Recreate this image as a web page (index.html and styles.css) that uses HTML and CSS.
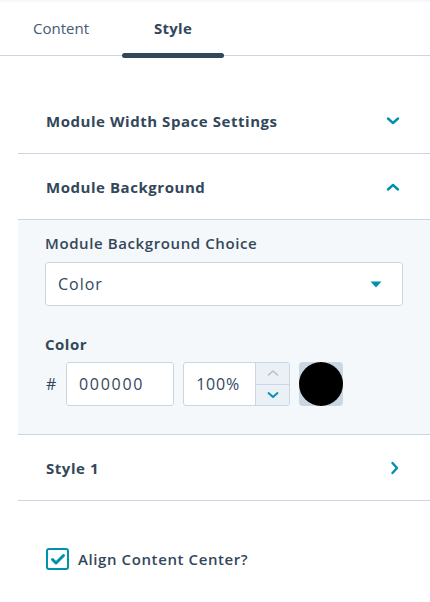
FILE: index.html
```html
<!DOCTYPE html>
<html>
<head>
<meta charset="utf-8">
<link rel="stylesheet" href="styles.css">
</head>
<body>
<div class="tabs">
  <div class="tab">Content</div>
  <div class="tab active">Style</div>
</div>
<div class="sections">
  <div class="row">
    <span class="row-title">Module Width Space Settings</span>
    <svg class="chev" width="14" height="10" viewBox="0 0 14 10"><path d="M2 2.5 L7 7 L12 2.5" fill="none" stroke="#0091ae" stroke-width="2.4" stroke-linecap="round" stroke-linejoin="round"/></svg>
  </div>
  <div class="row">
    <span class="row-title">Module Background</span>
    <svg class="chev" width="14" height="10" viewBox="0 0 14 10"><path d="M2 7.5 L7 3 L12 7.5" fill="none" stroke="#0091ae" stroke-width="2.4" stroke-linecap="round" stroke-linejoin="round"/></svg>
  </div>
  <div class="panel">
    <div class="label">Module Background Choice</div>
    <div class="select">
      <span class="select-val">Color</span>
      <svg width="12" height="7" viewBox="0 0 12 7"><path d="M0.5 0.5 L11.5 0.5 L6 6.5 Z" fill="#0091ae"/></svg>
    </div>
    <div class="label label-color">Color</div>
    <div class="color-row">
      <span class="hash">#</span>
      <div class="input hex">000000</div>
      <div class="input pct">
        <span class="pct-val">100%</span>
        <div class="stepper">
          <div class="step"><svg width="12" height="8" viewBox="0 0 12 8"><path d="M1.5 6 L6 2 L10.5 6" fill="none" stroke="#b0c1d4" stroke-width="1.6" stroke-linecap="round" stroke-linejoin="round"/></svg></div>
          <div class="step step-down"><svg width="12" height="8" viewBox="0 0 12 8"><path d="M1.5 2 L6 6 L10.5 2" fill="none" stroke="#0091ae" stroke-width="1.8" stroke-linecap="round" stroke-linejoin="round"/></svg></div>
        </div>
      </div>
      <div class="swatch"><div class="dot"></div></div>
    </div>
  </div>
  <div class="row">
    <span class="row-title">Style 1</span>
    <svg class="chev" width="10" height="14" viewBox="0 0 10 14"><path d="M2.5 2 L7 7 L2.5 12" fill="none" stroke="#0091ae" stroke-width="2.4" stroke-linecap="round" stroke-linejoin="round"/></svg>
  </div>
  <label class="check">
    <span class="box"><svg width="16" height="13" viewBox="0 0 16 13"><path d="M2.5 6.5 L6 10 L13.5 2.5" fill="none" stroke="#0091ae" stroke-width="3" stroke-linecap="round" stroke-linejoin="round"/></svg></span>
    <span class="check-label">Align Content Center?</span>
  </label>
</div>
</body>
</html>
```
FILE: styles.css
```css
* { box-sizing: border-box; }
body {
  margin: 0;
  background: #fff;
  font-family: "Open Sans", "Liberation Sans", sans-serif;
  color: #33475b;
}
.tabs {
  display: flex;
  gap: 10px;
  padding-left: 10px;
  height: 56px;
  border-top: 2px solid #f5f8fa;
  border-bottom: 1px solid #cbd6e2;
}
.tab {
  position: relative;
  width: 102px;
  text-align: center;
  font-size: 15px;
  line-height: 20px;
  padding-top: 16px;
  color: #425b76;
}
.tab.active {
  font-weight: 700;
  color: #33475b;
  letter-spacing: 0.3px;
}
.tab.active::after {
  content: "";
  position: absolute;
  left: 0;
  right: 0;
  bottom: -3px;
  height: 5px;
  border-radius: 3px;
  background: #33475b;
}
.sections {
  margin-left: 18px;
  padding-top: 32px;
}
.row {
  height: 66px;
  padding: 0 28px;
  display: flex;
  align-items: center;
  justify-content: space-between;
  border-bottom: 1px solid #cbd6e2;
}
.row-title {
  font-size: 15px;
  font-weight: 700;
  letter-spacing: 0.55px;
}
.chev { margin-right: 2px; }
.panel {
  background: #f5f8fa;
  padding: 13px 27px 28px 27px;
  border-bottom: 1px solid #cbd6e2;
}
.label {
  font-size: 15px;
  font-weight: 600;
  line-height: 20px;
  letter-spacing: 0.6px;
}
.select {
  margin-top: 9px;
  height: 44px;
  background: #fff;
  border: 1px solid #cbd6e2;
  border-radius: 3px;
  display: flex;
  align-items: center;
  justify-content: space-between;
  padding: 0 20px 0 12px;
  font-size: 16px;
}
.select-val { letter-spacing: 1px; }
.label-color {
  margin-top: 28px;
  font-weight: 700;
  letter-spacing: 0.5px;
}
.color-row {
  margin-top: 8px;
  display: flex;
  align-items: center;
}
.hash {
  font-size: 16px;
  width: 21px;
  padding-left: 1px;
}
.input {
  height: 44px;
  background: #fff;
  border: 1px solid #cbd6e2;
  border-radius: 3px;
  font-size: 16px;
  display: flex;
  align-items: center;
}
.hex {
  width: 108px;
  padding-left: 12px;
  letter-spacing: 1.7px;
}
.pct {
  margin-left: 9px;
  width: 107px;
  overflow: hidden;
}
.pct-val {
  flex: 1;
  text-align: right;
  padding-right: 15px;
  letter-spacing: 0.8px;
}
.stepper {
  width: 34px;
  height: 100%;
  display: flex;
  flex-direction: column;
  border-left: 1px solid #cbd6e2;
  background: #eaf0f6;
}
.step {
  flex: 1;
  display: flex;
  align-items: center;
  justify-content: center;
}
.step-down { border-top: 1px solid #cbd6e2; }
.swatch {
  margin-left: 9px;
  width: 44px;
  height: 44px;
  border-radius: 4px;
  background: #cbd6e2;
}
.dot {
  width: 44px;
  height: 44px;
  border-radius: 50%;
  background: #000;
}
.check {
  display: flex;
  align-items: center;
  gap: 9px;
  margin-top: 47px;
  padding-left: 28px;
}
.box {
  width: 23px;
  height: 22px;
  border: 2px solid #0091ae;
  border-radius: 3px;
  display: flex;
  align-items: center;
  justify-content: center;
  background: #fff;
}
.check-label {
  font-size: 15px;
  font-weight: 600;
  letter-spacing: 0.6px;
}
```
